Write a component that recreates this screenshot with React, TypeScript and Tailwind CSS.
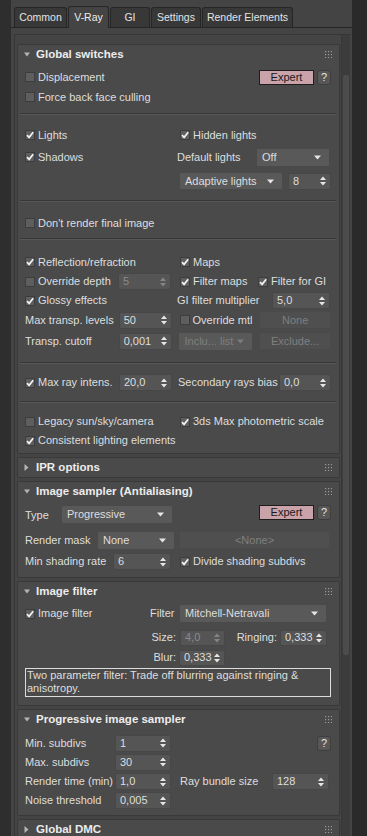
import React from 'react';

type Kids = { children?: React.ReactNode };

function Tick() {
  return (
    <svg width="8" height="8" viewBox="0 0 8 8">
      <path d="M1 4.2 L3.1 6.4 L7.2 1.2" fill="none" stroke="#f2f2f2" strokeWidth="1.7" />
    </svg>
  );
}

function Check({ on, label }: { on?: boolean; label: string }) {
  return (
    <div className="flex items-center gap-[3px]">
      <span className="flex h-[10px] w-[10px] items-center justify-center border border-[#3d3d3d] bg-[#5e5e5e]">
        {on && <Tick />}
      </span>
      <span>{label}</span>
    </div>
  );
}

function UpDown({ off }: { off?: boolean }) {
  const c = off ? '#858585' : '#e6e6e6';
  return (
    <svg width="6" height="10" viewBox="0 0 6 10">
      <path d="M0 4 L3 0.5 L6 4 Z" fill={c} />
      <path d="M0 6 L3 9.5 L6 6 Z" fill={c} />
    </svg>
  );
}

function Down({ off }: { off?: boolean }) {
  return (
    <svg width="7" height="5" viewBox="0 0 7 5">
      <path d="M0 0.5 L7 0.5 L3.5 4.5 Z" fill={off ? '#7c7c7c' : '#e6e6e6'} />
    </svg>
  );
}

function Spin({ v, w, h = 'h-[17px]', off }: { v: string; w: string; h?: string; off?: boolean }) {
  return (
    <div
      className={`flex ${h} ${w} items-center justify-between rounded-[2px] border border-[#474747] bg-[#555555] pl-[4px] pr-[4px] ${off ? 'text-[#8a8a8a]' : ''}`}
    >
      <span>{v}</span>
      <UpDown off={off} />
    </div>
  );
}

function Drop({ v, w, h = 'h-[19px]', off }: { v: string; w: string; h?: string; off?: boolean }) {
  return (
    <div
      className={`flex ${h} ${w} items-center justify-between rounded-[2px] border border-[#4a4a4a] bg-[#595959] pl-[5px] pr-[8px] ${off ? 'bg-[#4f4f4f] text-[#7f7f7f]' : ''}`}
    >
      <span>{v}</span>
      <Down off={off} />
    </div>
  );
}

function Btn({ v, w, off }: { v: string; w: string; off?: boolean }) {
  return (
    <div
      className={`flex h-[18px] ${w} items-center justify-center rounded-[2px] border border-[#4a4a4a] ${off ? 'bg-[#4f4f4f] text-[#7f7f7f]' : 'bg-[#595959]'}`}
    >
      {v}
    </div>
  );
}

function Expert() {
  return (
    <div className="flex items-center gap-[3px]">
      <div className="flex h-[15px] w-[55px] items-center justify-center border border-[#1e1e1e] bg-[#c9a2aa] text-[#1a1a1a]">
        Expert
      </div>
      <Help />
    </div>
  );
}

function Help() {
  return (
    <div className="flex h-[15px] w-[14px] items-center justify-center rounded-[3px] border border-[#3e3e3e] bg-[#575757] text-[#e6e6e6]">
      ?
    </div>
  );
}

function Grip() {
  return (
    <svg width="7" height="7" viewBox="0 0 7 7">
      {[0, 3, 6].map((x) =>
        [0, 3, 6].map((y) => <rect key={`${x}-${y}`} x={x} y={y} width="1.2" height="1.2" fill="#9a9a9a" />),
      )}
    </svg>
  );
}

function Rollout({ title, open = true, children, className = '' }: Kids & { title: string; open?: boolean; className?: string }) {
  return (
    <div className={`shrink-0 rounded-[2px] border border-[#393939] bg-[#4a4a4a] ${className}`}>
      <div className="flex h-[19px] items-center pr-[7px] pl-[6px]">
        <span className="flex w-[12px] items-center text-[#b4b4b4]">
          {open ? (
            <svg width="6" height="5" viewBox="0 0 6 5">
              <path d="M0 0.5 L6 0.5 L3 4.5 Z" fill="#b4b4b4" />
            </svg>
          ) : (
            <svg width="5" height="7" viewBox="0 0 5 7">
              <path d="M0.5 0 L4.5 3.5 L0.5 7 Z" fill="#b4b4b4" />
            </svg>
          )}
        </span>
        <span className="flex-1 text-[11.5px] font-bold text-[#ececec]">{title}</span>
        <Grip />
      </div>
      {children && <div className="pr-[8px] pl-[7px]">{children}</div>}
    </div>
  );
}

function Sep({ className = '' }: { className?: string }) {
  return <div className={`-mx-[5px] h-[2px] border-t border-[#373737] border-b border-b-[#575757] ${className}`} />;
}

function Row({ className = '', children }: Kids & { className?: string }) {
  return <div className={`flex items-center ${className}`}>{children}</div>;
}

function GlobalSwitches() {
  return (
    <Rollout title="Global switches">
      <Row className="mt-[3px] h-[20px] justify-between">
        <Check label="Displacement" />
        <Expert />
      </Row>
      <Row className="h-[20px]">
        <Check label="Force back face culling" />
      </Row>
      <Sep className="mt-[6px]" />

      <Row className="mt-[10px] h-[20px]">
        <div className="w-[155px]">
          <Check on label="Lights" />
        </div>
        <Check on label="Hidden lights" />
      </Row>
      <Row className="h-[24px]">
        <div className="w-[152px]">
          <Check on label="Shadows" />
        </div>
        <span className="w-[79px]">Default lights</span>
        <Drop v="Off" w="w-[74px]" />
      </Row>
      <Row className="mt-[2px] h-[20px]">
        <div className="w-[154px]" />
        <Drop v="Adaptive lights" w="w-[104px]" h="h-[18px]" />
        <div className="w-[5px]" />
        <Spin v="8" w="w-[43px]" />
      </Row>
      <Sep className="mt-[9px]" />

      <Row className="mt-[11px] h-[20px]">
        <Check label="Don't render final image" />
      </Row>
      <Sep className="mt-[5px]" />

      <Row className="mt-[12px] h-[20px]">
        <div className="w-[155px]">
          <Check on label="Reflection/refraction" />
        </div>
        <Check on label="Maps" />
      </Row>
      <Row className="h-[19px]">
        <div className="flex w-[155px] items-center">
          <div className="w-[93px]">
            <Check label="Override depth" />
          </div>
          <Spin v="5" w="w-[53px]" off />
        </div>
        <div className="w-[78px]">
          <Check on label="Filter maps" />
        </div>
        <Check on label="Filter for GI" />
      </Row>
      <Row className="h-[19px]">
        <div className="w-[152px]">
          <Check on label="Glossy effects" />
        </div>
        <span className="w-[95px]">GI filter multiplier</span>
        <Spin v="5,0" w="w-[58px]" />
      </Row>
      <Row className="h-[20px]">
        <span className="w-[94px]">Max transp. levels</span>
        <Spin v="50" w="w-[53px]" />
        <div className="w-[8px]" />
        <div className="w-[80px]">
          <Check label="Override mtl" />
        </div>
        <Btn v="None" w="w-[72px]" off />
      </Row>
      <Row className="mt-[1px] h-[20px]">
        <span className="w-[94px]">Transp. cutoff</span>
        <Spin v="0,001" w="w-[53px]" />
        <div className="w-[7px]" />
        <Drop v="Inclu... list" w="w-[75px]" off />
        <div className="w-[6px]" />
        <Btn v="Exclude..." w="w-[72px]" off />
      </Row>
      <Sep className="mt-[11px]" />

      <Row className="mt-[9px] h-[19px]">
        <div className="w-[94px]">
          <Check on label="Max ray intens." />
        </div>
        <Spin v="20,0" w="w-[53px]" />
        <div className="w-[6px]" />
        <span className="w-[101px]">Secondary rays bias</span>
        <Spin v="0,0" w="w-[52px]" />
      </Row>
      <Sep className="mt-[9px]" />

      <Row className="mt-[9px] h-[19px]">
        <div className="w-[155px]">
          <Check label="Legacy sun/sky/camera" />
        </div>
        <Check on label="3ds Max photometric scale" />
      </Row>
      <Row className="h-[19px]">
        <Check on label="Consistent lighting elements" />
      </Row>
      <div className="h-[3px]" />
    </Rollout>
  );
}

function ImageSampler() {
  return (
    <Rollout title="Image sampler (Antialiasing)">
      <Row className="mt-[4px] h-[23px] items-start">
        <span className="mt-[2px] w-[36px]">Type</span>
        <Drop v="Progressive" w="w-[112px]" />
        <div className="flex-1" />
        <Expert />
      </Row>
      <Row className="mt-[2px] h-[20px]">
        <span className="w-[72px]">Render mask</span>
        <Drop v="None" w="w-[78px]" />
        <div className="w-[4px]" />
        <Btn v="<None>" w="w-[151px]" off />
      </Row>
      <Row className="mt-[2px] h-[19px]">
        <span className="w-[88px]">Min shading rate</span>
        <Spin v="6" w="w-[58px]" />
        <div className="w-[9px]" />
        <Check on label="Divide shading subdivs" />
      </Row>
      <div className="h-[6px]" />
    </Rollout>
  );
}

function ImageFilter() {
  return (
    <Rollout title="Image filter">
      <Row className="mt-[2px] h-[21px]">
        <div className="w-[125px]">
          <Check on label="Image filter" />
        </div>
        <span className="w-[29px]">Filter</span>
        <Drop v="Mitchell-Netravali" w="w-[148px]" />
      </Row>
      <Row className="mt-[5px] h-[17px]">
        <span className="w-[155px] pr-[4px] text-right">Size:</span>
        <Spin v="4,0" w="w-[45px]" h="h-[16px]" off />
        <span className="w-[55px] pr-[3px] text-right">Ringing:</span>
        <Spin v="0,333" w="w-[47px]" h="h-[16px]" />
      </Row>
      <Row className="mt-[3px] h-[17px]">
        <span className="w-[154px] pr-[3px] text-right">Blur:</span>
        <Spin v="0,333" w="w-[46px]" h="h-[16px]" />
      </Row>
      <div className="mt-[2px] h-[29px] border border-[#dcdcdc] px-[1px] text-[11px] leading-[13px]">
        Two parameter filter: Trade off blurring against ringing &amp; anisotropy.
      </div>
      <div className="h-[8px]" />
    </Rollout>
  );
}

function Progressive() {
  return (
    <Rollout title="Progressive image sampler">
      <Row className="mt-[5px] h-[18px]">
        <span className="w-[90px]">Min. subdivs</span>
        <Spin v="1" w="w-[56px]" />
        <div className="flex-1" />
        <Help />
      </Row>
      <Row className="mt-[1px] h-[18px]">
        <span className="w-[90px]">Max. subdivs</span>
        <Spin v="30" w="w-[56px]" />
      </Row>
      <Row className="mt-[1px] h-[19px]">
        <span className="w-[90px]">Render time (min)</span>
        <Spin v="1,0" w="w-[56px]" />
        <div className="w-[9px]" />
        <span className="w-[92px]">Ray bundle size</span>
        <Spin v="128" w="w-[57px]" />
      </Row>
      <Row className="h-[19px]">
        <span className="w-[90px]">Noise threshold</span>
        <Spin v="0,005" w="w-[56px]" />
      </Row>
      <div className="h-[5px]" />
    </Rollout>
  );
}

const tabs = ['Common', 'V-Ray', 'GI', 'Settings', 'Render Elements'];
const tabW = ['w-[53px]', 'w-[41px]', 'w-[40px]', 'w-[50px]', 'w-[91px]'];

export default function App() {
  return (
    <div className="flex h-[836px] w-[367px] overflow-hidden bg-[#2c2c2c] font-['Liberation_Sans',Arial,sans-serif] text-[11px] text-[#dedede]">
      <div className="w-[11px] shrink-0 bg-[#2e2e2e]" />
      <div className="flex w-[341px] shrink-0 flex-col bg-[#444444]">
        <div className="flex h-[28px] shrink-0 items-end border-b border-[#262626] pl-[3px]">
          {tabs.map((t, i) => (
            <div
              key={t}
              className={`flex ${tabW[i]} mr-[1px] items-center justify-center whitespace-nowrap rounded-t-[3px] border border-b-0 border-[#262626] text-[10.5px] ${
                t === 'V-Ray' ? '-mb-px h-[22px] bg-[#444444] text-[#ececec]' : 'h-[20px] bg-[#383838] text-[#e4e4e4]'
              }`}
            >
              {t}
            </div>
          ))}
        </div>
        <div className="mt-[6px] ml-[3px] flex w-[337px] flex-1 border-t border-l border-[#363636]">
          <div className="flex w-[325px] flex-col gap-[3px] pt-[9px] pl-[2px]">
            <GlobalSwitches />
            <Rollout title="IPR options" open={false} />
            <ImageSampler />
            <ImageFilter />
            <Progressive />
            <Rollout title="Global DMC" open={false} className="h-[20px]" />
          </div>
          <div className="ml-[1px] flex w-[9px] flex-col border-l border-[#383838] bg-[#3c3c3c] pt-[40px]">
            <div className="mx-[1px] h-[580px] rounded-[2px] bg-[#4c4c4c]" />
          </div>
        </div>
      </div>
      <div className="w-[15px] shrink-0 bg-[#2a2a2a]" />
    </div>
  );
}
